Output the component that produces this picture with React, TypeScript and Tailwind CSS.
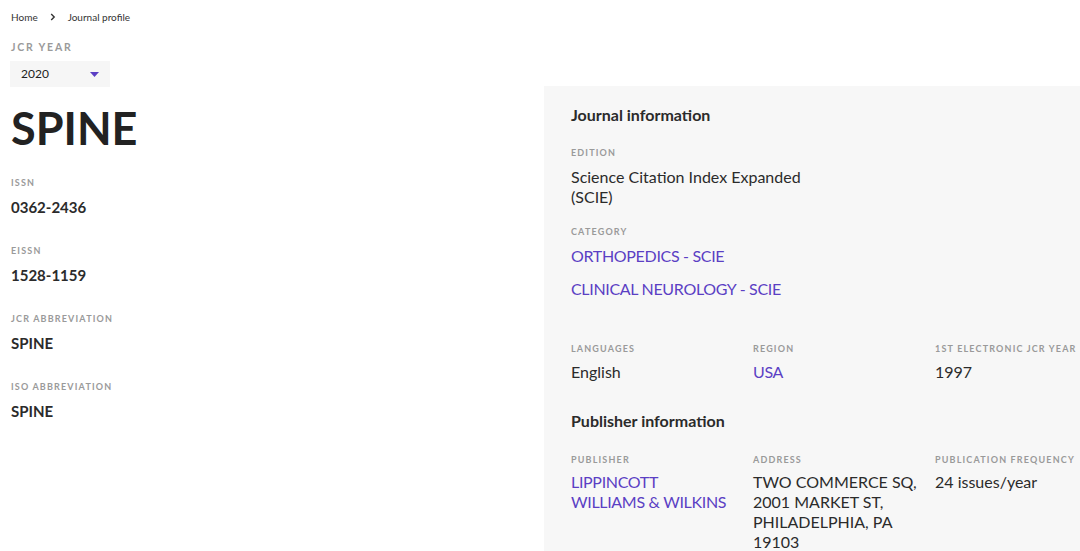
import React from "react";

const F = { fontFamily: "Lato, 'Noto Sans', sans-serif" };

function Label({ children, big }: { children: React.ReactNode; big?: boolean }) {
  return (
    <div
      className={
        (big ? "text-[10.5px] tracking-[0.17em] " : "text-[9px] tracking-[0.13em] ") +
        "leading-[12px] font-bold uppercase text-[#9a9a9a] whitespace-nowrap"
      }
    >
      {children}
    </div>
  );
}

function LeftField({ label, value }: { label: string; value: string }) {
  return (
    <div className="flex flex-col">
      <Label>{label}</Label>
      <div className="mt-[8px] text-[15px] leading-[20px] font-bold text-[#2b2b2b]">{value}</div>
    </div>
  );
}

function Link({ children }: { children: React.ReactNode }) {
  return <div className="text-[16px] leading-[20px] tracking-[-0.02em] text-[#5b3fc4]">{children}</div>;
}

function Val({ children }: { children: React.ReactNode }) {
  return <div className="text-[16px] leading-[20px] text-[#2b2b2b]">{children}</div>;
}

export default function App() {
  return (
    <div style={F} className="w-[1080px] h-[551px] overflow-hidden bg-white flex">
      <div className="w-[544px] shrink-0 pl-[11px] pt-[11px]">
        <div className="flex items-center text-[10px] leading-[12px] text-[#333]">
          <span>Home</span>
          <svg className="mx-[12px]" width="6" height="8" viewBox="0 0 6 8">
            <path d="M1.2 1 L4.2 4 L1.2 7" stroke="#333" strokeWidth="1.4" fill="none" />
          </svg>
          <span>Journal profile</span>
        </div>
        <div className="mt-[18px]">
          <Label big>JCR Year</Label>
        </div>
        <div className="mt-[8px] -ml-[1px] w-[100px] h-[26px] bg-[#f6f6f6] flex items-center justify-between pl-[11px] pr-[11px]">
          <span className="text-[12px] text-[#222]">2020</span>
          <svg width="9" height="5" viewBox="0 0 9 5">
            <path d="M0 0 L9 0 L4.5 5 Z" fill="#5b3fc4" />
          </svg>
        </div>
        <div className="mt-[16px] text-[45px] leading-[50px] font-bold text-[#222]">SPINE</div>
        <div className="mt-[24px] flex flex-col gap-[28px]">
          <LeftField label="ISSN" value="0362-2436" />
          <LeftField label="EISSN" value="1528-1159" />
          <LeftField label="JCR Abbreviation" value="SPINE" />
          <LeftField label="ISO Abbreviation" value="SPINE" />
        </div>
      </div>
      <div className="mt-[86px] flex-1 bg-[#f7f7f7] pl-[27px] pt-[19px] overflow-hidden">
        <div className="text-[16px] leading-[20px] font-bold text-[#2b2b2b]">Journal information</div>
        <div className="mt-[22px]">
          <Label>Edition</Label>
          <div className="mt-[8px] w-[250px]">
            <Val>Science Citation Index Expanded (SCIE)</Val>
          </div>
        </div>
        <div className="mt-[19px]">
          <Label>Category</Label>
          <div className="mt-[8px] flex flex-col gap-[13px]">
            <Link>ORTHOPEDICS - SCIE</Link>
            <Link>CLINICAL NEUROLOGY - SCIE</Link>
          </div>
        </div>
        <div className="mt-[44px] grid grid-cols-[182px_182px_182px]">
          <div>
            <Label>Languages</Label>
            <div className="mt-[7px]"><Val>English</Val></div>
          </div>
          <div>
            <Label>Region</Label>
            <div className="mt-[7px]"><Link>USA</Link></div>
          </div>
          <div>
            <Label>1st Electronic JCR Year</Label>
            <div className="mt-[7px]"><Val>1997</Val></div>
          </div>
        </div>
        <div className="mt-[29px] text-[16px] leading-[20px] font-bold text-[#2b2b2b]">Publisher information</div>
        <div className="mt-[23px] grid grid-cols-[182px_182px_182px]">
          <div>
            <Label>Publisher</Label>
            <div className="mt-[6px] w-[160px]"><Link>LIPPINCOTT WILLIAMS &amp; WILKINS</Link></div>
          </div>
          <div>
            <Label>Address</Label>
            <div className="mt-[6px] w-[170px]"><Val>TWO COMMERCE SQ, 2001 MARKET ST, PHILADELPHIA, PA 19103</Val></div>
          </div>
          <div>
            <Label>Publication Frequency</Label>
            <div className="mt-[6px]"><Val>24 issues/year</Val></div>
          </div>
        </div>
      </div>
    </div>
  );
}
